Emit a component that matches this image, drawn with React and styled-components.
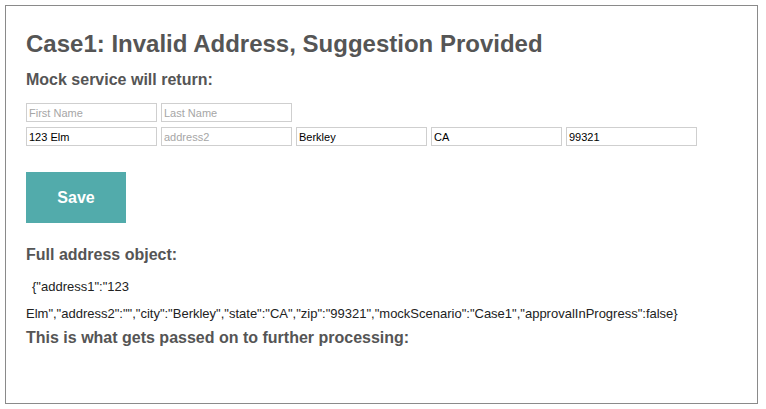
import React from "react";
import styled, { createGlobalStyle } from "styled-components";

const GlobalStyle = createGlobalStyle`
  body {
    margin: 0;
    background: #fff;
    font-family: "Liberation Sans", Arial, sans-serif;
  }
`;

const Container = styled.div`
  margin: 5px 8px 6px 5px;
  height: 399px;
  box-sizing: border-box;
  border: 1px solid #8a8a8a;
  padding: 24px 20px 0 20px;
  color: #555;
`;

const Title = styled.h1`
  margin: 0;
  font-size: 24px;
  line-height: 28px;
  font-weight: bold;
`;

const SubTitle = styled.h3`
  margin: ${(props) => props.margin || "0"};
  font-size: 16px;
  line-height: 18px;
  font-weight: bold;
`;

const Form = styled.div`
  display: flex;
  flex-direction: column;
  gap: 5px;
  margin-top: 14px;
`;

const Row = styled.div`
  display: flex;
  gap: 4px;
`;

const Input = styled.input`
  width: 131px;
  height: 19px;
  box-sizing: border-box;
  margin: 0;
  padding: 0 2px;
  border: 1px solid #cfcfcf;
  font-family: "Liberation Sans", Arial, sans-serif;
  font-size: 11px;
  color: #000;
  outline: none;

  &::placeholder {
    color: #a6a6a6;
  }
`;

const Button = styled.button`
  display: block;
  width: 100px;
  height: 51px;
  margin-top: 26px;
  border: none;
  background: #52abab;
  color: #fff;
  font-family: "Liberation Sans", Arial, sans-serif;
  font-size: 16px;
  font-weight: bold;
  cursor: pointer;
`;

const Json = styled.p`
  margin: 9px 0 2px;
  font-size: 13px;
  line-height: 27px;
  color: #222;
  text-indent: 6px;
`;

const address = {
  address1: "123 Elm",
  address2: "",
  city: "Berkley",
  state: "CA",
  zip: "99321",
  mockScenario: "Case1",
  approvalInProgress: false,
};

const App = () => {
  return (
    <>
      <GlobalStyle />
      <Container>
        <Title>Case1: Invalid Address, Suggestion Provided</Title>
        <SubTitle margin="13px 0 0">Mock service will return:</SubTitle>
        <Form>
          <Row>
            <Input placeholder="First Name" />
            <Input placeholder="Last Name" />
          </Row>
          <Row>
            <Input defaultValue="123 Elm" />
            <Input placeholder="address2" />
            <Input defaultValue="Berkley" />
            <Input defaultValue="CA" />
            <Input defaultValue="99321" />
          </Row>
        </Form>
        <Button>Save</Button>
        <SubTitle margin="23px 0 0">Full address object:</SubTitle>
        <Json>{JSON.stringify(address)}</Json>
        <SubTitle>This is what gets passed on to further processing:</SubTitle>
      </Container>
    </>
  );
};

export default App;
